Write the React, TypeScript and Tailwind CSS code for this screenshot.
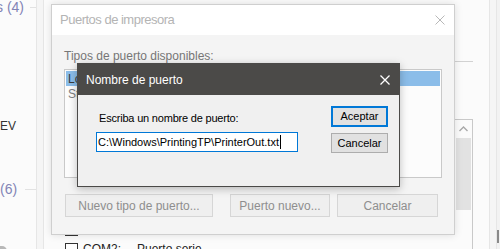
import React from 'react';

const font = "font-['Liberation_Sans',Arial,sans-serif]";

function CloseIcon({ color, width = 1 }: { color: string; width?: number }) {
  return (
    <svg width="10" height="10" viewBox="0 0 10 10" className="block">
      <path d="M0.5 0.5 L9.5 9.5 M9.5 0.5 L0.5 9.5" stroke={color} strokeWidth={width} fill="none" />
    </svg>
  );
}

function BackButton({ label, className }: { label: string; className: string }) {
  return (
    <div
      className={`flex h-[23px] items-center justify-center border border-[#d6d6d6] bg-[#efefef] text-[12px] text-[#8e8e8e] ${className}`}
    >
      {label}
    </div>
  );
}

function ComRow({ name }: { name: string }) {
  return (
    <div className="flex h-[20px] shrink-0 items-start">
      <div className="h-[13px] w-[13px] border border-[#333] bg-white" />
      <span className="ml-[5px] w-[54px] text-[12px] leading-[13px] text-[#222]">{name}</span>
      <span className="text-[12px] leading-[13px] text-[#222]">Puerto serie</span>
    </div>
  );
}

function PortsDialog() {
  return (
    <div className="absolute left-[51px] top-[4px] flex h-[231px] w-[404px] flex-col border border-[#cfcfcf] bg-[#f4f4f4] shadow-[0_0_8px_rgba(0,0,0,0.12)]">
      <div className="flex h-[30px] items-center justify-between bg-white pl-[8px] pr-[9px]">
        <span className="text-[13px] tracking-[-0.5px] text-[#b4b4b4]">Puertos de impresora</span>
        <CloseIcon color="#b8b8b8" />
      </div>
      <div className="flex flex-1 flex-col px-[12px] pt-[14px]">
        <div className="h-[15px] text-[12px] leading-[15px] text-[#777]">Tipos de puerto disponibles:</div>
        <div className="mt-[5px] h-[109px] border border-[#c9c9c9] bg-[#fcfcfc] p-px">
          <div className="flex h-[15px] items-center bg-[#8bbde9] pl-[2px] text-[12px] text-[#3a3a3a]">Local Port</div>
          <div className="flex h-[16px] items-center pl-[2px] text-[12px] text-[#808080]">Standard TCP/IP Port</div>
        </div>
        <div className="mt-[16px] flex">
          <BackButton label="Nuevo tipo de puerto..." className="ml-px w-[148px]" />
          <BackButton label="Puerto nuevo..." className="ml-[17px] w-[100px]" />
          <BackButton label="Cancelar" className="ml-[7px] w-[101px]" />
        </div>
      </div>
    </div>
  );
}

function PortNameDialog() {
  return (
    <div className="absolute left-[77px] top-[63px] flex h-[124px] w-[323px] flex-col border border-[#4b4a48] bg-[#f0f0f0] shadow-[0_2px_8px_rgba(0,0,0,0.25)]">
      <div className="flex h-[31px] shrink-0 items-center justify-between bg-[#4b4a48] pl-[8px] pr-[9px]">
        <span className="text-[12px] text-white">Nombre de puerto</span>
        <CloseIcon color="#ffffff" width={1.3} />
      </div>
      <div className="flex flex-1 pl-[18px]">
        <div className="flex w-[202px] flex-col pt-[17px]">
          <div className="h-[13px] pl-[3px] text-[11px] leading-[13px] tracking-[-0.2px] text-black">Escriba un nombre de puerto:</div>
          <div className="mt-[7px] flex h-[20px] items-center border border-[#0078d7] bg-white pl-px">
            <span className="text-[11px] leading-[13px] text-black">C:\Windows\PrintingTP\PrinterOut.txt</span>
            <span className="ml-px h-[14px] w-px bg-black" />
          </div>
        </div>
        <div className="ml-[33px] flex w-[57px] flex-col pt-[11px]">
          <div className="flex h-[21px] items-center justify-center border-2 border-[#0078d7] bg-[#e1e1e1] text-[11px] text-black">
            Aceptar
          </div>
          <div className="mt-[6px] flex h-[20px] items-center justify-center border border-[#adadad] bg-[#e1e1e1] text-[11px] text-black">
            Cancelar
          </div>
        </div>
      </div>
    </div>
  );
}

export default function App() {
  return (
    <div className={`relative h-[249px] w-[500px] overflow-hidden bg-[#fbfbfb] ${font}`}>
      <div className="flex h-full">
        {/* left settings pane */}
        <div className="flex w-[36px] flex-col overflow-hidden">
          <div className="flex h-[14px] items-center">
            <span className="ml-[-4px] whitespace-nowrap text-[14px] leading-[14px] text-[#8284b6]">s (4)</span>
            <div className="ml-[6px] h-px flex-1 bg-[#e2e2e2]" />
          </div>
          <div className="mt-[106px] h-[12px] whitespace-nowrap text-[12px] leading-[12px] text-[#333]">EV</div>
          <div className="mt-[50px] flex h-[14px] items-center">
            <span className="whitespace-nowrap text-[14px] leading-[14px] text-[#8284b6]">(6)</span>
            <div className="ml-[8px] h-px flex-1 bg-[#e2e2e2]" />
          </div>
          <div className="mt-[50px] ml-[-5px] h-[10px] w-[12px] shrink-0 rounded-full bg-[#b8b8b8]" />
        </div>
        <div className="w-[8px] border-x border-[#e6e6e6] bg-[#f5f5f5]" />

        {/* middle content */}
        <div className="flex flex-1">
          <div className="flex flex-1 flex-col pl-[21px] pt-[223px]">
            <ComRow name="COM1:" />
            <ComRow name="COM2:" />
          </div>
          <div className="flex w-[34px] flex-col pr-[16px]">
            <div className="mt-[61px] h-px bg-[#d2d2d2]" />
            <div className="mt-[57px] flex flex-1 flex-col border-r border-t border-[#c9c9c9]">
              <div className="flex h-[18px] items-center justify-center">
                <svg width="9" height="6" viewBox="0 0 9 6">
                  <path d="M0.5 5 L4.5 1 L8.5 5" stroke="#a8a8a8" strokeWidth="1.4" fill="none" />
                </svg>
              </div>
              <div className="ml-px mr-px h-[72px] bg-[#e2e2e2]" />
            </div>
          </div>
        </div>

        {/* right edge */}
        <div className="w-[8px] border-x border-[#e6e6e6] bg-[#f5f5f5]" />
        <div className="flex w-[3px] flex-col bg-[#f2f2f2] pt-[230px]">
          <div className="h-[13px] w-[2px] bg-[#8a8a8a]" />
        </div>
      </div>

      <PortsDialog />
      <PortNameDialog />
    </div>
  );
}
